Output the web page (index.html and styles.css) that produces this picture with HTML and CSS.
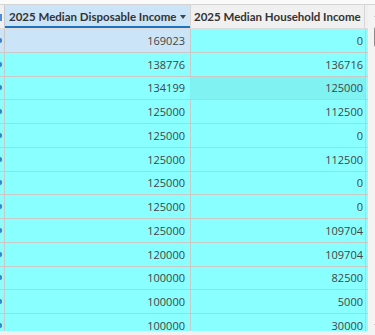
FILE: index.html
```html
<!DOCTYPE html>
<html>
<head>
<meta charset="utf-8">
<link rel="stylesheet" href="styles.css">
</head>
<body>
<div class="frame">
  <div class="topstrip"></div>
  <div class="main">
    <div class="table">
      <div class="row head">
        <div class="cell stub"><span class="stub-mark"></span></div>
        <div class="cell hcell sorted"><span class="htext">2025 Median Disposable Income</span><span class="sort"></span></div>
        <div class="cell hcell"><span class="htext">2025 Median Household Income</span></div>
      </div>
      <div class="row sel">
        <div class="cell stub"><span class="dot"></span></div>
        <div class="cell num c1">169023</div>
        <div class="cell num">0</div>
      </div>
      <div class="row"><div class="cell stub"><span class="dot"></span></div><div class="cell num">138776</div><div class="cell num">136716</div></div>
      <div class="row"><div class="cell stub"><span class="dot"></span></div><div class="cell num">134199</div><div class="cell num hover">125000</div></div>
      <div class="row"><div class="cell stub"><span class="dot"></span></div><div class="cell num">125000</div><div class="cell num">112500</div></div>
      <div class="row"><div class="cell stub"><span class="dot"></span></div><div class="cell num">125000</div><div class="cell num">0</div></div>
      <div class="row"><div class="cell stub"><span class="dot"></span></div><div class="cell num">125000</div><div class="cell num">112500</div></div>
      <div class="row"><div class="cell stub"><span class="dot"></span></div><div class="cell num">125000</div><div class="cell num">0</div></div>
      <div class="row"><div class="cell stub"><span class="dot"></span></div><div class="cell num">125000</div><div class="cell num">0</div></div>
      <div class="row"><div class="cell stub"><span class="dot"></span></div><div class="cell num">125000</div><div class="cell num">109704</div></div>
      <div class="row"><div class="cell stub"><span class="dot"></span></div><div class="cell num">120000</div><div class="cell num">109704</div></div>
      <div class="row"><div class="cell stub"><span class="dot"></span></div><div class="cell num">100000</div><div class="cell num">82500</div></div>
      <div class="row"><div class="cell stub"><span class="dot"></span></div><div class="cell num">100000</div><div class="cell num">5000</div></div>
      <div class="row"><div class="cell stub"><span class="dot"></span></div><div class="cell num">100000</div><div class="cell num">30000</div></div>
    </div>
    <div class="scrollbar">
      <span class="arrow up"></span>
      <span class="thumb"></span>
      <span class="spacer"></span>
      <span class="arrow down"></span>
    </div>
  </div>
</div>
</body>
</html>
```
FILE: styles.css
```css
html, body {
  margin: 0;
  padding: 0;
  background: #f0f0f0;
}
.frame {
  width: 375px;
  height: 335px;
  overflow: hidden;
  display: flex;
  flex-direction: column;
  background: #f0f0f0;
  font-family: "Open Sans", "Noto Sans", sans-serif;
}
.topstrip {
  height: 4px;
  background: #fafafa;
  border-bottom: 1px solid #d4d4d4;
  flex: none;
}
.main {
  display: flex;
  flex: 1;
  min-height: 0;
}
.table {
  display: flex;
  flex-direction: column;
  width: 368px;
  flex: none;
  height: 326px;
  overflow: hidden;
}
.row {
  display: grid;
  grid-template-columns: 5px 185px 175px;
  height: 23.75px;
  flex: none;
  background: #8affff;
  border-bottom: 1px solid #cbc8c8;
  box-sizing: border-box;
}
.row.head {
  height: 24px;
  background: #f0f0f0;
  border-bottom: 1px solid #dcdcdc;
}
.cell {
  border-right: 1px solid #cbc8c8;
  box-sizing: content-box;
  display: flex;
  align-items: center;
  overflow: hidden;
  white-space: nowrap;
}
.stub {
  position: relative;
}
.dot {
  width: 2px;
  height: 5px;
  background: #3f7fd0;
  border-radius: 0 2px 2px 0;
}
.stub-mark {
  width: 2px;
  height: 7px;
  background: #4a8ee0;
  margin-top: 2px;
}
.hcell {
  font-family: Lato, "Open Sans", sans-serif;
  font-size: 11.5px;
  font-weight: 700;
  color: #333;
  padding-left: 4px;
  border-right-color: #d6d6d6;
}
.hcell.sorted {
  background: #cce4f7;
  box-shadow: inset 0 -2px 0 #1e73c0;
  justify-content: space-between;
  padding-right: 3px;
  width: 178px;
}
.sort {
  width: 0;
  height: 0;
  border-left: 3px solid transparent;
  border-right: 3px solid transparent;
  border-top: 4px solid #444;
  margin-right: 1px;
}
.num {
  justify-content: flex-end;
  padding-right: 5px;
  width: 180px;
  font-size: 11px;
  color: #444;
}
.num + .num {
  width: 173px;
  padding-right: 2px;
}
.row.sel .stub, .row.sel .c1 {
  background: #cce4f7;
}
.hover {
  background: #80f2f2;
}
.scrollbar {
  flex: 1;
  display: flex;
  flex-direction: column;
  align-items: center;
  background: #f3f3f3;
  position: relative;
}
.arrow {
  width: 0;
  height: 0;
  border-left: 2px solid transparent;
  border-right: 2px solid transparent;
  margin-left: 2px;
}
.arrow.up {
  border-bottom: 2px solid #999;
  margin-top: 10px;
}
.arrow.down {
  border-top: 2px solid #999;
  margin-bottom: 9px;
}
.thumb {
  width: 8px;
  height: 22px;
  margin-top: 9px;
  margin-left: 6px;
  background: #8a8a8a;
  border-radius: 4px;
}
.spacer {
  flex: 1;
}
```
